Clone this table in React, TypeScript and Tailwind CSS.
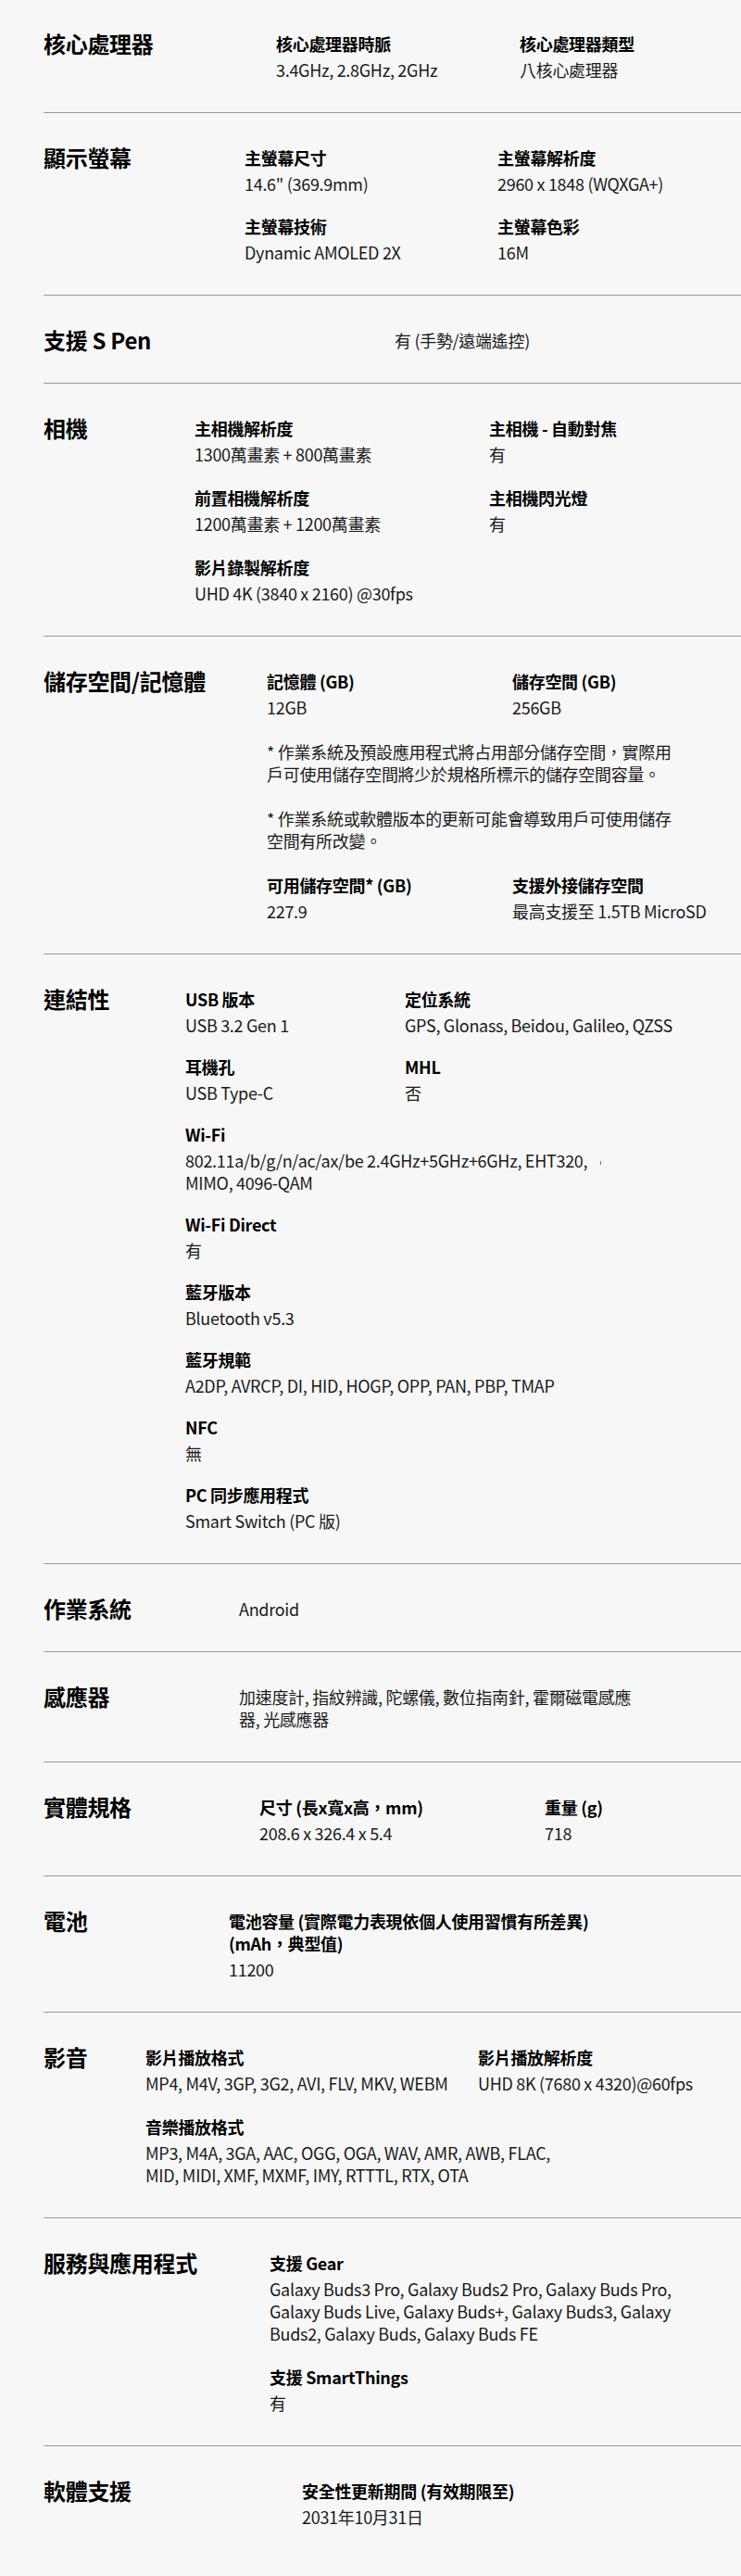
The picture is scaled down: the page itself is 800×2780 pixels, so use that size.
import type { ReactNode } from "react";

type Item = {
  label?: ReactNode;
  value: ReactNode;
  wide?: boolean;
  valueClass?: string;
  labelClass?: string;
};

type Section = {
  title: string;
  titleWidth: string;
  grid: string;
  gap?: string;
  items: Item[];
};

const sections: Section[] = [
  {
    title: "核心處理器",
    titleWidth: "w-[251px]",
    grid: "grid-cols-[263px_1fr]",
    items: [
      { label: "核心處理器時脈", value: "3.4GHz, 2.8GHz, 2GHz" },
      { label: "核心處理器類型", value: "八核心處理器" },
    ],
  },
  {
    title: "顯示螢幕",
    titleWidth: "w-[217px]",
    grid: "grid-cols-[273px_1fr]",
    gap: "gap-y-[22px]",
    items: [
      { label: "主螢幕尺寸", value: '14.6" (369.9mm)' },
      { label: "主螢幕解析度", value: "2960 x 1848 (WQXGA+)" },
      { label: "主螢幕技術", value: "Dynamic AMOLED 2X" },
      { label: "主螢幕色彩", value: "16M" },
    ],
  },
  {
    title: "支援 S Pen",
    titleWidth: "w-[379px]",
    grid: "grid-cols-1",
    items: [{ value: "有 (手勢/遠端遙控)" }],
  },
  {
    title: "相機",
    titleWidth: "w-[163px]",
    grid: "grid-cols-[318px_1fr]",
    items: [
      { label: "主相機解析度", value: "1300萬畫素 + 800萬畫素" },
      { label: "主相機 - 自動對焦", value: "有" },
      { label: "前置相機解析度", value: "1200萬畫素 + 1200萬畫素" },
      { label: "主相機閃光燈", value: "有" },
      { label: "影片錄製解析度", value: "UHD 4K (3840 x 2160) @30fps", wide: true },
    ],
  },
  {
    title: "儲存空間/記憶體",
    titleWidth: "w-[241px]",
    grid: "grid-cols-[265px_1fr]",
    gap: "gap-y-[24px]",
    items: [
      { label: "記憶體 (GB)", value: "12GB" },
      { label: "儲存空間 (GB)", value: "256GB" },
      {
        value: "* 作業系統及預設應用程式將占用部分儲存空間，實際用戶可使用儲存空間將少於規格所標示的儲存空間容量。",
        wide: true,
        valueClass: "w-[452px]",
      },
      {
        value: "* 作業系統或軟體版本的更新可能會導致用戶可使用儲存空間有所改變。",
        wide: true,
        valueClass: "w-[452px]",
      },
      { label: "可用儲存空間* (GB)", value: "227.9" },
      { label: "支援外接儲存空間", value: "最高支援至 1.5TB MicroSD" },
    ],
  },
  {
    title: "連結性",
    titleWidth: "w-[153px]",
    grid: "grid-cols-[237px_1fr]",
    gap: "gap-y-[21px]",
    items: [
      { label: "USB 版本", value: "USB 3.2 Gen 1" },
      { label: "定位系統", value: "GPS, Glonass, Beidou, Galileo, QZSS" },
      { label: "耳機孔", value: "USB Type-C" },
      { label: "MHL", value: "否" },
      {
        label: "Wi-Fi",
        value: (
          <>
            802.11a/b/g/n/ac/ax/be 2.4GHz+5GHz+6GHz, EHT320,
            <span className="ml-[14px] inline-block h-[4px] w-px bg-[#3b82f6] align-middle" /> MIMO, 4096-QAM
          </>
        ),
        wide: true,
        valueClass: "w-[475px]",
      },
      { label: "Wi-Fi Direct", value: "有", wide: true },
      { label: "藍牙版本", value: "Bluetooth v5.3", wide: true },
      { label: "藍牙規範", value: "A2DP, AVRCP, DI, HID, HOGP, OPP, PAN, PBP, TMAP", wide: true },
      { label: "NFC", value: "無", wide: true },
      { label: "PC 同步應用程式", value: "Smart Switch (PC 版)", wide: true },
    ],
  },
  {
    title: "作業系統",
    titleWidth: "w-[211px]",
    grid: "grid-cols-1",
    items: [{ value: "Android" }],
  },
  {
    title: "感應器",
    titleWidth: "w-[211px]",
    grid: "grid-cols-1",
    items: [
      {
        value: "加速度計, 指紋辨識, 陀螺儀, 數位指南針, 霍爾磁電感應器, 光感應器",
        valueClass: "w-[436px]",
      },
    ],
  },
  {
    title: "實體規格",
    titleWidth: "w-[233px]",
    grid: "grid-cols-[308px_1fr]",
    items: [
      { label: "尺寸 (長x寬x高，mm)", value: "208.6 x 326.4 x 5.4" },
      { label: "重量 (g)", value: "718" },
    ],
  },
  {
    title: "電池",
    titleWidth: "w-[200px]",
    grid: "grid-cols-1",
    items: [
      {
        label: "電池容量 (實際電力表現依個人使用習慣有所差異) (mAh，典型值)",
        labelClass: "w-[410px]",
        value: "11200",
      },
    ],
  },
  {
    title: "影音",
    titleWidth: "w-[110px]",
    grid: "grid-cols-[359px_1fr]",
    items: [
      { label: "影片播放格式", value: "MP4, M4V, 3GP, 3G2, AVI, FLV, MKV, WEBM" },
      { label: "影片播放解析度", value: "UHD 8K (7680 x 4320)@60fps" },
      {
        label: "音樂播放格式",
        value: "MP3, M4A, 3GA, AAC, OGG, OGA, WAV, AMR, AWB, FLAC, MID, MIDI, XMF, MXMF, IMY, RTTTL, RTX, OTA",
        wide: true,
        valueClass: "w-[462px]",
      },
    ],
  },
  {
    title: "服務與應用程式",
    titleWidth: "w-[244px]",
    grid: "grid-cols-1",
    items: [
      {
        label: "支援 Gear",
        value:
          "Galaxy Buds3 Pro, Galaxy Buds2 Pro, Galaxy Buds Pro, Galaxy Buds Live, Galaxy Buds+, Galaxy Buds3, Galaxy Buds2, Galaxy Buds, Galaxy Buds FE",
        valueClass: "w-[448px]",
      },
      { label: "支援 SmartThings", value: "有" },
    ],
  },
  {
    title: "軟體支援",
    titleWidth: "w-[279px]",
    grid: "grid-cols-1",
    items: [{ label: "安全性更新期間 (有效期限至)", value: "2031年10月31日" }],
  },
];

function SpecItem({ item }: { item: Item }) {
  return (
    <div className={item.wide ? "col-span-2" : ""}>
      {item.label && (
        <p className={`mb-1 text-[18px] leading-[24px] font-bold text-black ${item.labelClass ?? ""}`}>{item.label}</p>
      )}
      <p className={`text-[18px] leading-[24px] text-[#1a1a1a] ${item.valueClass ?? ""}`}>{item.value}</p>
    </div>
  );
}

export default function App() {
  return (
    <div
      className="min-h-[2780px] overflow-hidden bg-[#f7f7f7] pl-[47px] tracking-[-0.3px] text-black"
      style={{ fontFamily: '"Noto Sans CJK TC", "Noto Sans", sans-serif' }}
    >
      {sections.map((s, i) => (
        <section
          key={s.title}
          className={`flex pt-[36px] first:pt-[35px] ${
            i === sections.length - 1 ? "pb-[48px]" : "border-b border-[#9a9a9a] pb-[34px]"
          }`}
        >
          <h2 className={`${s.titleWidth} shrink-0 text-[24px] leading-[24px] font-bold`}>{s.title}</h2>
          <div className={`grid ${s.grid} ${s.gap ?? "gap-y-[23px]"} min-w-0 flex-1 content-start`}>
            {s.items.map((item, j) => (
              <SpecItem key={j} item={item} />
            ))}
          </div>
        </section>
      ))}
    </div>
  );
}
